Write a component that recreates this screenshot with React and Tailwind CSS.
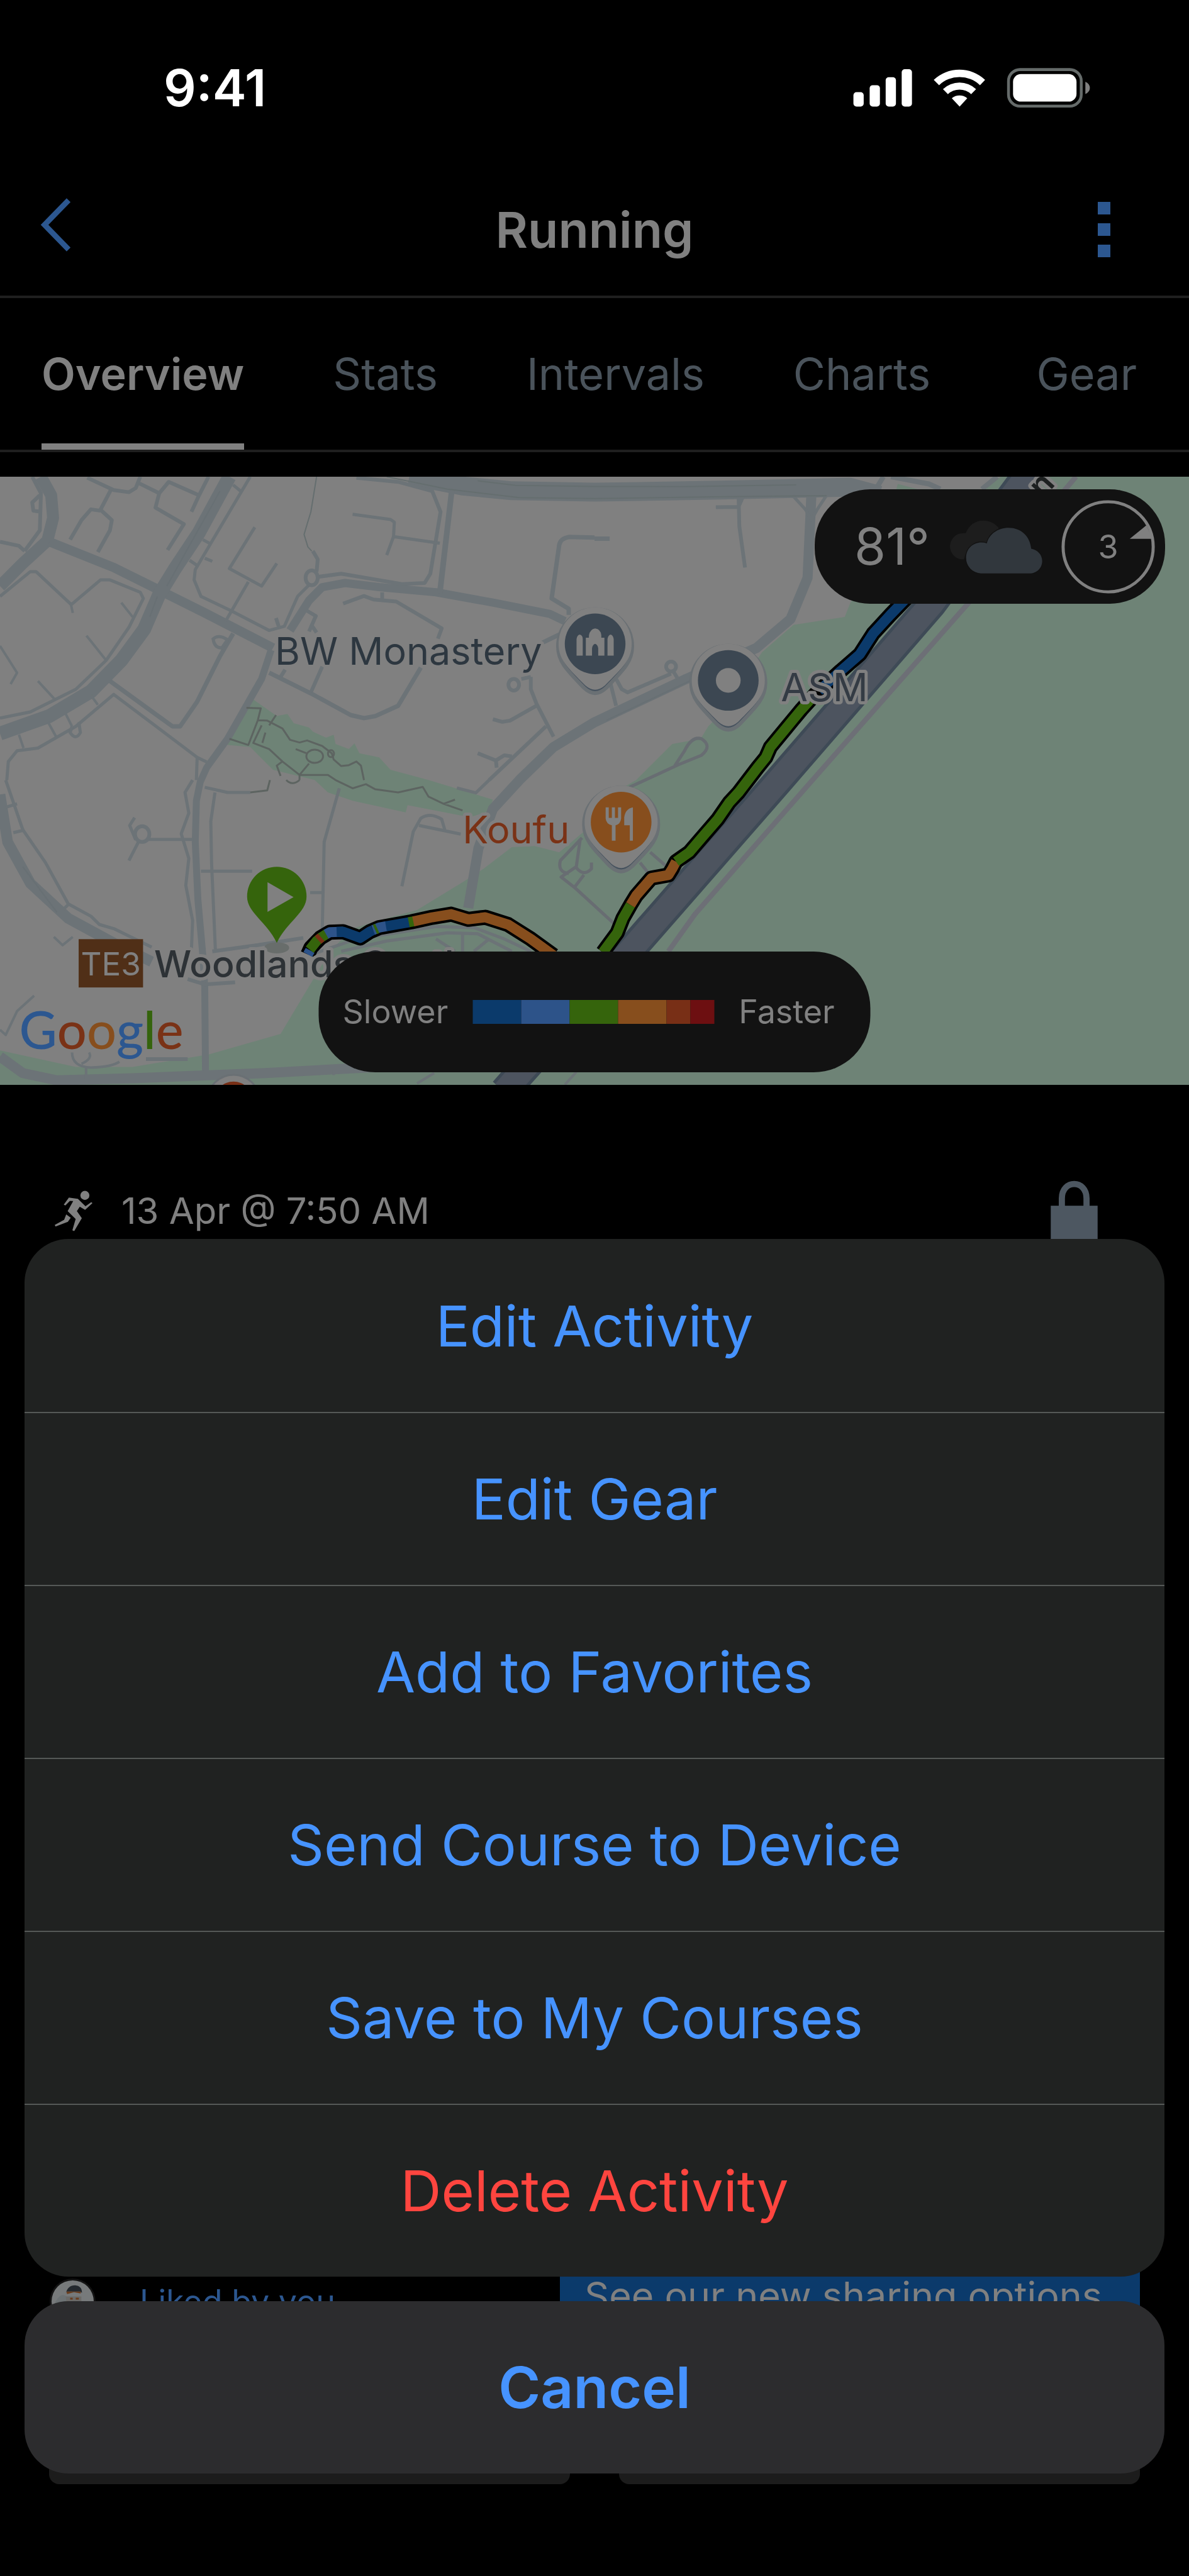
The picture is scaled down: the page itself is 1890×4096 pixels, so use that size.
import React from 'react';

const tabs = ['Overview', 'Stats', 'Intervals', 'Charts', 'Gear'];

const sheetActions = [
    { label: 'Edit Activity' },
    { label: 'Edit Gear' },
    { label: 'Add to Favorites' },
    { label: 'Send Course to Device' },
    { label: 'Save to My Courses' },
    { label: 'Delete Activity', danger: true },
];

const paceColors = [
    { color: 'bg-[#0b3a6b]', width: 'w-[77px]' },
    { color: 'bg-[#2d5389]', width: 'w-[77px]' },
    { color: 'bg-[#35640c]', width: 'w-[77px]' },
    { color: 'bg-[#874e1d]', width: 'w-[77px]' },
    { color: 'bg-[#782f16]', width: 'w-[38px]' },
    { color: 'bg-[#6d0f11]', width: 'w-[38px]' },
];

// Map geometry lives on its own grid, stretched onto the map by a group transform.
const parks = [
    'M668 1110 L730 1190 758 1180 775 1225 815 1245 825 1265 860 1295 880 1280 885 1325 920 1350 935 1322 948 1370 1000 1390 1030 1450 1130 1500 1300 1595 1290 1650 1240 1680 1075 1622 1070 1657 930 1600 865 1560 830 1500 720 1450 660 1340 600 1330Z',
    'M2368 65 L2420 90 2590 90 2640 30 3136 30 3136 3000 0 3000 0 2810 200 2890 350 2890 550 2830 740 2730 820 2485 870 2330 930 2220 1000 2180 1100 2130 1225 1990 1275 1930 1350 1825 1410 1820 1475 1850 1540 1750 1640 1540 1678 1500 1773 1325 1848 1300 1868 1240 1900 1180 2010 880 2093 748 2228 710 2243 640 2300 500Z',
];

const roads = [
    { w: 30, d: 'M1080 25 L1220 75 1350 98 1568 105 1900 95 2150 85 2240 80 2320 120' },
    { w: 19, d: 'M108 30 L135 120 140 230 125 340 60 450 0 560' },
    { w: 15, d: 'M130 345 L300 470 415 575 540 690 720 860' },
    { w: 22, d: 'M605 30 L525 300 460 480 420 600 380 770 320 920 240 1070 130 1190 0 1275' },
    { w: 13, d: 'M765 775 L815 630 850 565 910 545 1000 565 1150 590 1300 640 1450 695 1490 730' },
    { w: 9, d: 'M1192 90 L1160 595' },
    { w: 11, d: 'M715 870 L690 1010 600 1300 545 1440 528 1510 518 1600 515 1800 522 2080 535 2350 540 2500 542 2920' },
    { w: 16, d: 'M1235 2120 L1262 1830 1300 1640 1370 1500 1460 1340 1568 1220 1810 1010 1995 860 2085 720 2130 520 2140 120' },
    { w: 5, d: 'M2090 120 L2125 190 2140 240 2155 190 2180 120' },
    { w: 17, d: 'M0 1570 L20 1800 80 2000 180 2170 300 2290 400 2380' },
    { w: 16, d: 'M0 2840 L60 2920 150 2955 350 2945 700 2920 950 2895 1060 2885' },
    { w: 7, d: 'M615 790 L580 900 520 1120 475 1240 455 1240 290 1020' },
    { w: 7, d: 'M710 980 L820 1080 925 1185 960 1200 990 1190 1050 1140 1110 955' },
    { w: 6, d: 'M820 1075 L850 950 M740 1000 L752 965' },
    { w: 6, d: 'M85 30 L108 110 105 290 65 390 M105 120 L85 155 88 195 108 200 M0 345 L50 365 65 390' },
    { w: 5, d: 'M0 1200 L80 1170 200 1060 280 920 340 760 378 620 370 590 290 530 265 530 188 650 95 490 80 490 0 610' },
    { w: 5, d: 'M660 30 L560 340 515 480 512 530 530 610 610 680 710 775 750 755 785 610 815 555' },
    { w: 5, d: 'M672 275 L605 475 690 560 730 450 M655 540 L595 730 M615 70 L635 100 M535 335 L555 355 M500 435 L520 460 M540 425 L560 440' },
    { w: 6, d: 'M825 390 L838 430 835 490 M840 515 L900 500 1060 550 1120 545 1135 500 1162 200 1140 100 1050 55 940 35' },
    { w: 5, d: 'M930 212 L1030 237 1040 250 1038 320 1160 352 M1038 320 L1020 410' },
    { w: 6, d: 'M905 645 L960 608 985 625 1045 635 1165 765 1155 815 M1008 590 V625 M810 680 L833 705 815 780 M820 745 L835 785 M728 715 L735 755' },
    { w: 6, d: 'M230 35 L300 95 340 105 358 85 370 30 M365 60 L420 110 445 55 525 120 550 30 M420 110 L410 180 485 260 442 385 M525 120 L505 200' },
    { w: 6, d: 'M292 95 L265 190 295 240 290 290 258 395 M265 195 L240 188 215 240 185 335' },
    { w: 5, d: 'M18 1500 L22 1410 45 1358 100 1345 200 1240 300 1085 520 1390 545 1412 M520 1390 L518 1500' },
    { w: 4, d: 'M186 640 L192 690 M320 640 L350 710 M228 800 L278 915 M100 1020 L145 1110 M0 850 L45 980 28 1035 M240 1090 L258 1135 M172 1175 L190 1240 M127 1220 L148 1290 M50 1280 L62 1345' },
    { w: 5, d: 'M560 820 Q575 790 600 820 L585 860 Q565 860 562 815 M190 1240 L185 1270 Q200 1310 212 1270 L208 1220' },
    { w: 7, d: 'M1568 325 L1500 322 Q1478 330 1475 360 L1455 620 1500 670 1500 700 M1568 330 H1608 M1430 835 L1475 795' },
    { w: 6, d: 'M1400 1000 L1400 1060 1415 1130 1460 1290 M1415 1140 L1345 1212 1325 1218 1300 1205 M1440 1240 L1290 1500 M1310 1440 L1308 1405 1330 1380 1350 1385 M1260 1370 L1308 1405 M1375 1010 L1400 1000' },
    { w: 6, d: 'M1948 120 L1950 270 1965 470 M1888 178 L1948 176 1960 125 M1610 1030 L1625 1140 M1625 1010 L1640 1060 1655 1075 1770 985 M1775 970 L1788 1010' },
    { w: 8, d: 'M2330 30 L2315 75 M2350 30 L2450 65 2480 90 M2630 30 L2590 90' },
    { w: 5, d: 'M15 1500 L60 1740 120 1900 180 2100 240 2160 262 2200 300 2220 400 2310 M15 1632 L45 1615 M35 1755 L65 1742 M165 2130 L182 2100' },
    { w: 5, d: 'M508 1500 L488 1560 498 1660 478 1760 498 1880 490 2010 508 2180 505 2320 M567 1560 L556 1700 558 1900 568 2320 M540 1535 L600 1560 660 1560' },
    { w: 5, d: 'M390 1788 H510 M355 1682 L342 1720 358 1790 M365 1800 L340 1890 M530 1942 H665 M895 1540 L855 1800 850 2220 M818 2045 H850' },
    { w: 5, d: 'M1060 2015 L1090 1750 1110 1685 Q1135 1655 1165 1690 L1173 1740 M1105 1720 L1215 1762 M1205 1538 L1255 1562 1290 1500' },
    { w: 4, d: 'M190 2820 Q190 2890 240 2893 Q295 2890 315 2865 M227 2890 V2950 M235 2820 Q245 2850 215 2875 M90 2545 L45 2620 15 2735 0 2710 M142 2260 L165 2300 192 2260' },
    { w: 6, d: 'M385 2852 H495 M495 2465 L540 2490 620 2480 M560 2330 L680 2300 800 2265' },
    { w: 5, d: 'M830 2340 L940 2270 1150 2210 1250 2215 1330 2270 1400 2330 M900 2330 L1020 2280 1180 2240 1260 2245 1350 2330 M1150 2270 L1200 2330 M1220 2240 V2330 M1290 2270 L1250 2330' },
    { w: 4, d: 'M1145 2920 L1100 2970 M880 2905 V2930 M1520 2915 L1490 2976' },
];

const parkPaths =
    'M650 1150 L688 1152 680 1210 705 1212 745 1250 765 1305 790 1318 810 1308 850 1335 875 1370 880 1400 900 1432 920 1428 940 1410 952 1430 960 1500 M728 1185 L710 1235 M680 1210 L655 1330 605 1300 M690 1235 L668 1320 710 1350 745 1410 790 1475 865 1475 885 1500 930 1540 965 1520 990 1545 1050 1560 1115 1533 1130 1580 1170 1615 1220 1647 M700 1270 L692 1320 M1170 1615 L1200 1595 M780 1350 L808 1370 M815 1420 L790 1475 V1500 M745 1410 L730 1430 740 1480 M660 1560 L705 1550 712 1500 M755 1500 Q770 1530 790 1500';

const trails =
    'M2838 30 L2553 645 2143 1500 1833 2150 1763 2330';

const smallTrails =
    'M1660 1535 L1790 1425 1850 1380 Q1880 1335 1850 1300 Q1825 1285 1805 1360 L1780 1430 M1535 1780 L1478 1890 Q1470 1945 1500 1953 M1530 1790 L1520 1920 1480 1970 1515 2020 1640 2230 M1520 1925 Q1540 1970 1560 1930 V1900 M1515 2020 L1540 1960 M1688 1900 L1710 1950 M1715 1850 L1765 1930';

const routeStart = 'M812 2345 L820 2312 845 2265 870 2237 905 2235 950 2265 975 2235 1000 2215 1085 2187 1140 2165 1190 2150 1235 2175 1280 2165 1340 2200 1400 2270 1460 2350';
const routeEnd = 'M1590 2335 L1628 2240 1643 2170 1663 2105 1678 2060 1718 1975 1763 1960 1773 1930 1783 1895 1818 1850 1853 1775 1893 1690 1923 1610 1948 1560 1973 1500 1998 1440 2020 1390 2032 1340 2068 1260 2113 1160 2150 1085 2218 970 2268 890 2303 790 2348 700 2390 620';

const routeSegments = [
    { color: '#2d5389', d: 'M812 2345 L818 2325' },
    { color: '#35640c', d: 'M817 2322 L835 2280 845 2265' },
    { color: '#35640c', d: 'M845 2265 L862 2245' },
    { color: '#782f16', d: 'M839 2275 L847 2262' },
    { color: '#2d5389', d: 'M860 2247 L870 2237 905 2235' },
    { color: '#0b3a6b', d: 'M888 2236 L905 2235 950 2265 975 2235 984 2227' },
    { color: '#2d5389', d: 'M984 2227 L1000 2215 1020 2208' },
    { color: '#35640c', d: 'M989 2224 L995 2219' },
    { color: '#0b3a6b', d: 'M1018 2209 L1080 2189' },
    { color: '#35640c', d: 'M1078 2189 L1092 2184' },
    { color: '#874e1d', d: 'M1090 2185 L1140 2165 1190 2150 1235 2175 1280 2165 1340 2200 1400 2270 1460 2350' },
    { color: '#35640c', d: 'M1590 2335 L1628 2240 1643 2170 1663 2105' },
    { color: '#874e1d', d: 'M1663 2105 L1678 2060 1718 1975 1763 1960 1773 1930 1783 1895' },
    { color: '#35640c', d: 'M1783 1895 L1818 1850 1853 1775 1893 1690 1923 1610 1948 1560 1973 1500 1998 1440 2020 1390 2032 1340 2068 1260 2113 1160 2150 1085' },
    { color: '#0b3a6b', d: 'M2160 1068 L2218 970 2268 890 2303 790 2348 700 2390 620' },
];

const StatusIcons = () => (
    <svg viewBox="80 60 1155 196" className="h-16 w-[379px]" aria-hidden="true">
        <g fill="#fff">
            <rect x="82" y="178" width="50" height="70" rx="15" />
            <rect x="161" y="144" width="50" height="104" rx="15" />
            <rect x="239" y="105" width="50" height="143" rx="15" />
            <rect x="317" y="66" width="50" height="182" rx="15" />
            <path d="M473 118 A182 182 0 0 1 723 118 L698 144 A145 145 0 0 0 499 144Z" />
            <path d="M518 163 A118 118 0 0 1 679 163 L655 188 A82 82 0 0 0 542 188Z" />
            <path d="M561 208 A58 58 0 0 1 636 208 L599 248Z" />
            <rect x="859" y="90" width="309" height="134" rx="38" />
        </g>
        <rect x="837" y="68" width="354" height="178" rx="56" fill="none" stroke="#656b6a" strokeWidth="14" />
        <path d="M1211 127 Q1233 137 1233 157 T1211 187Z" fill="#808080" />
    </svg>
);

const Pin = ({ x, y, color, children }) => (
    <g transform={`translate(${x} ${y})`}>
        <path d="M-60 4 A60 60 0 1 1 60 4 C60 29 45 43 18 71 Q0 88 -18 71 C-45 43 -60 29 -60 4Z" fill="#46525e" stroke="#6a7074" strokeWidth="6" />
        <path d="M-59 0 A59 59 0 1 1 59 0 C59 25 45 38 16 67 Q0 81 -16 67 C-45 38 -59 25 -59 0Z" fill="#808080" />
        <circle r="49" fill={color} />
        {children}
    </g>
);

const RouteMap = () => (
    <svg viewBox="0 770 1920 982" className="block w-full" role="img" aria-label="Route map">
        <rect y="770" width="1920" height="982" fill="#808080" />
        <g transform="translate(0 760) scale(0.61224 0.33333)" fill="none" strokeLinejoin="round">
            {parks.map((d, i) => (
                <path key={i} d={d} fill="#6e8376" />
            ))}
            <g stroke="#6c7377">
                {roads.map((road, i) => (
                    <path key={i} d={road.d} strokeWidth={road.w} vectorEffect="non-scaling-stroke" />
                ))}
                <ellipse cx="822" cy="520" rx="16" ry="36" strokeWidth="6" vectorEffect="non-scaling-stroke" />
                <ellipse cx="1355" cy="1038" rx="14" ry="28" strokeWidth="6" vectorEffect="non-scaling-stroke" />
                <ellipse cx="1770" cy="950" rx="13" ry="24" strokeWidth="6" vectorEffect="non-scaling-stroke" />
                <ellipse cx="375" cy="1762" rx="19" ry="38" strokeWidth="6" vectorEffect="non-scaling-stroke" />
            </g>
            {/* dark seams in the wide roads */}
            <g stroke="#656e6f" strokeWidth="2">
                <path d="M1020 30 L1180 90 1370 131 1568 136 1850 128 2180 122 M1260 50 L1360 72 1568 77 1800 78 2100 70" vectorEffect="non-scaling-stroke" />
                <path d="M835 30 L820 200 810 260 802 310 812 370 822 390" vectorEffect="non-scaling-stroke" />
                <path d="M580 100 L440 560 M415 610 L395 710 M1600 1210 L1830 1010 M150 2140 L60 1920" stroke="#687074" vectorEffect="non-scaling-stroke" />
            </g>
            <g stroke="#5d6461" strokeWidth="3">
                <path d={parkPaths} vectorEffect="non-scaling-stroke" />
                <ellipse cx="830" cy="1385" rx="22" ry="32" vectorEffect="non-scaling-stroke" />
                <ellipse cx="873" cy="1372" rx="8" ry="17" vectorEffect="non-scaling-stroke" />
            </g>
            <path d={trails} stroke="#6d6f76" strokeWidth="8" vectorEffect="non-scaling-stroke" />
            <path d={smallTrails} stroke="#686d72" strokeWidth="5" vectorEffect="non-scaling-stroke" />
            <path d="M2735 -40 L2458 645 2055 1500 1660 2330 1375 2915 1330 3010" stroke="#3e4a56" strokeWidth="48" vectorEffect="non-scaling-stroke" />
            <path d="M2735 -40 L2458 645 2055 1500 1660 2330 1375 2915 1330 3010" stroke="#4d545f" strokeWidth="38" vectorEffect="non-scaling-stroke" />
            <path d={routeStart} stroke="#000" strokeWidth="24" vectorEffect="non-scaling-stroke" />
            <path d={routeEnd} stroke="#000" strokeWidth="24" vectorEffect="non-scaling-stroke" />
            {routeSegments.map((segment, i) => (
                <path key={i} d={segment.d} stroke={segment.color} strokeWidth="16" vectorEffect="non-scaling-stroke" />
            ))}
        </g>

        <circle cx="377" cy="1778" r="42" fill="#808080" stroke="#6a7074" strokeWidth="3" />
        <circle cx="377" cy="1778" r="31" fill="#782f16" />

        <Pin x={961} y={1040} color="#3c4752">
            <path d="M-30 19 V-8 Q-29 -14 -25 -15 Q-20 -14 -20 -8 V19Z M20 19 V-8 Q21 -14 25 -15 Q29 -14 30 -8 V19Z M-15 19 V-10 H-10 V-14 Q-8 -24 0 -25 Q9 -24 10 -14 V-10 H15 V19 H5 V7 Q4 1 0 0 Q-4 1 -5 7 V19Z" fill="#808080" />
        </Pin>
        <Pin x={1176} y={1099} color="#3c4752">
            <circle r="20" fill="#808080" />
        </Pin>
        <Pin x={1003} y={1328} color="#874e1d">
            <path d="M-25 -24 H-20 V-7 H-15 V-24 H-10 V-7 H-5 V-24 H0 V-6 Q-1 3 -9 5 V30 H-15 V5 Q-24 3 -25 -6Z M19 -24 V30 H14 V5 H5 V-8 Q7 -22 19 -24Z" fill="#808080" />
        </Pin>

        <ellipse cx="447" cy="1531" rx="20" ry="9" fill="#686d6b" />
        <g className="font-['Inter',sans-serif]" stroke="#808080" strokeWidth="10" strokeLinejoin="round" paintOrder="stroke">
            <text x="444" y="1074" fontSize="62" fill="#2d3740">BW Monastery</text>
            <text x="1261" y="1133" fontSize="63" fill="#343b44">ASM</text>
            <text x="747" y="1362" fontSize="62" fill="#7a3216">Koufu</text>
            <text x="249" y="1579" fontSize="60" fontWeight="500" fill="#2d3236">Woodlands South</text>
            <text x="1684" y="806" fontSize="52" fontWeight="600" fill="#1d2020" transform="rotate(-48 1684 806)">n</text>
        </g>
        <rect x="127" y="1517" width="104" height="78" fill="#502f17" />
        <text x="179" y="1576" textAnchor="middle" fontSize="52" fill="#808080" className="font-['Inter',sans-serif]">TE3</text>

        <path d="M447 1523 C431 1489 399 1474 399 1448 A48 48 0 0 1 495 1448 C495 1474 463 1489 447 1523Z" fill="#35640c" />
        <path d="M432 1425 L474 1449 432 1473Z" fill="#808080" />

        <text x="31" y="1694" fontSize="84" fontWeight="500" className="font-['Lato',sans-serif]">
            <tspan fill="#2c5790">G</tspan>
            <tspan fill="#7a3216">o</tspan>
            <tspan fill="#874e1d">o</tspan>
            <tspan fill="#2c5790">g</tspan>
            <tspan fill="#35640c">l</tspan>
            <tspan fill="#7a3216">e</tspan>
        </text>
    </svg>
);

const WeatherBadge = () => (
    <div className="absolute top-5 right-[38px] flex h-[182px] w-[557px] items-center justify-end gap-7 rounded-[88px] bg-[#121212] pr-3.5">
        <span className="text-[81px] leading-none">81°</span>
        <svg viewBox="94 238 458 258" className="h-[85px] w-[151px]" aria-hidden="true">
            <path d="M158 427 A62 62 0 1 1 182 302 C196 262 228 240 268 240 C296 240 322 253 342 276 L282 352 C230 346 190 360 174 427Z" fill="#1d1d1d" />
            <path d="M256 495 A74 74 0 0 1 184 420 C184 364 236 334 284 350 C296 304 338 275 389 275 C450 275 492 316 498 376 C530 382 551 406 551 435 C551 470 524 495 490 495Z" fill="#31373d" stroke="#121212" strokeWidth="8" paintOrder="stroke" />
        </svg>
        <svg viewBox="-78 -78 156 156" className="size-[153px]" role="img" aria-label="Wind 3">
            <circle r="73" fill="none" stroke="#808080" strokeWidth="5" />
            <path d="M35 -13 L62 -35 72 -13Z" fill="#808080" />
            <text y="19" textAnchor="middle" fontSize="53" fill="#808080">3</text>
        </svg>
    </div>
);

const PaceLegend = () => (
    <div className="absolute bottom-5 left-1/2 flex h-48 w-[877px] -translate-x-1/2 items-center gap-[39px] rounded-[90px] bg-[#121212] pl-[38px] text-[52px]">
        <span>Slower</span>
        <div className="flex h-[38px]">
            {paceColors.map((pace, i) => (
                <div key={i} className={`${pace.color} ${pace.width}`}></div>
            ))}
        </div>
        <span>Faster</span>
    </div>
);

const RunnerIcon = () => (
    <svg viewBox="54 102 184 198" className="h-[65px] w-[60px]" fill="#808080" aria-hidden="true">
        <circle cx="201" cy="125" r="22" />
        <path d="M123 136 L167 142 204 178 232 158 238 163 202 196 176 180 162 202 186 236 149 299 140 295 156 240 117 202 144 153 128 152 106 174 98 170Z" />
        <path d="M110 218 L132 234 118 254 58 277 54 269 100 244Z" />
    </svg>
);

const Avatar = () => (
    <svg viewBox="-38 -38 76 76" className="size-[75px]" role="img" aria-label="You">
        <circle r="37" fill="#131313" />
        <circle r="34" fill="#777a7b" />
        <path d="M-32 10 Q-20 -20 -8 -6 V34 H-10Z" fill="#6c7274" />
        <path d="M-11 -8 H14 V14 Q2 24 -9 14Z" fill="#6b6a68" />
        <path d="M-11 -13 Q-8 -26 4 -26 Q15 -25 15 -14 L12 -16 H-10Z" fill="#24292e" />
        <path d="M-10 -16 H13 V-13 L2 -15 -9 -12Z M-4 -6 H0 V-3 H-4Z M5 -6 H10 V-3 H5Z" fill="#6a3c1c" />
    </svg>
);

const ActivityPage = () => (
    <div className="flex min-h-screen flex-col">
        <div className="flex h-[260px] items-center justify-between pt-5 pr-[156px] pl-[260px] text-white">
            <span className="text-[81px] leading-none font-semibold">9:41</span>
            <StatusIcons />
        </div>

        <header className="grid h-[214px] grid-cols-3 items-center border-b-4 border-[#1f1f1f] px-16">
            <button type="button" aria-label="Back" className="justify-self-start pb-4">
                <svg viewBox="0 0 49 86" className="h-[85px] w-12" fill="none" stroke="#2c5790" strokeWidth="9">
                    <path d="M46 3 L7 43 46 83" />
                </svg>
            </button>
            <h1 className="text-center text-[79px] leading-none font-semibold">Running</h1>
            <button type="button" aria-label="More options" className="flex flex-col gap-3.5 justify-self-end pr-[61px]">
                <span className="size-5 bg-[#2c5790]"></span>
                <span className="size-5 bg-[#2c5790]"></span>
                <span className="size-5 bg-[#2c5790]"></span>
            </button>
        </header>

        <nav className="flex h-[245px] gap-[141px] border-b-4 border-[#1f1f1f] pr-[83px] pl-[66px] text-[70px]">
            {tabs.map((tab, i) => (
                <button
                    key={tab}
                    type="button"
                    className={
                        i === 0
                            ? 'border-y-[10px] border-t-transparent border-b-[#808080] font-semibold'
                            : 'border-y-[10px] border-transparent text-[#4a535b] last:ml-auto'
                    }
                >
                    {tab}
                </button>
            ))}
        </nav>

        <div className="relative mt-[39px]">
            <RouteMap />
            <WeatherBadge />
            <PaceLegend />
        </div>

        <div className="mt-[141px] flex h-[120px] items-center pr-[145px] pl-[87px]">
            <RunnerIcon />
            <span className="ml-[46px] text-[58px]">13 Apr @ 7:50 AM</span>
            <svg viewBox="0 0 76 102" className="ml-auto h-[100px] w-[75px]" role="img" aria-label="Private">
                <path d="M18 50 V30 C18 -1 58 -1 58 30 V50" fill="none" stroke="#4d5761" strokeWidth="10" />
                <rect y="42" width="76" height="60" fill="#4d5761" />
            </svg>
        </div>

        <div className="mt-auto px-[78px] pb-[146px]">
            <div className="flex h-[120px] items-start justify-between">
                <div className="flex items-center gap-[69px] pt-7">
                    <Avatar />
                    <a href="#likes" className="text-[52px] leading-none text-[#2c5790]">Liked by you</a>
                </div>
                <div className="h-[120px] w-[922px] bg-[#0b3a6b] pl-[39px] text-[61px] leading-[112px] whitespace-nowrap">
                    See our new sharing options
                </div>
            </div>
            <div className="flex gap-[78px]">
                <div className="h-[236px] flex-1 rounded-2xl bg-[#1c1c1c]"></div>
                <div className="h-[236px] flex-1 rounded-2xl bg-[#1c1c1c]"></div>
            </div>
        </div>
    </div>
);

const ActionSheet = () => (
    <div role="dialog" aria-label="Activity options" className="absolute inset-x-[39px] bottom-[163px] flex flex-col gap-[39px]">
        <div className="flex flex-col overflow-hidden rounded-[70px] bg-[#202221]">
            {sheetActions.map((action, i) => (
                <button
                    key={action.label}
                    type="button"
                    className={`h-[275px] text-[90px] ${action.danger ? 'text-[#ff453f]' : 'text-[#4693ff]'} ${i > 0 ? 'border-t-2 border-[#555957]' : 'pt-0.5'}`}
                >
                    {action.label}
                </button>
            ))}
        </div>
        <button type="button" className="h-[274px] rounded-[70px] bg-[#2c2c2e] text-[91px] font-semibold text-[#4693ff]">
            Cancel
        </button>
    </div>
);

const App = () => {
    return (
        <div className="relative min-h-screen overflow-hidden bg-black font-['Inter','Liberation_Sans',sans-serif] text-[#808080]">
            <ActivityPage />
            <ActionSheet />
        </div>
    );
};

export default App;
